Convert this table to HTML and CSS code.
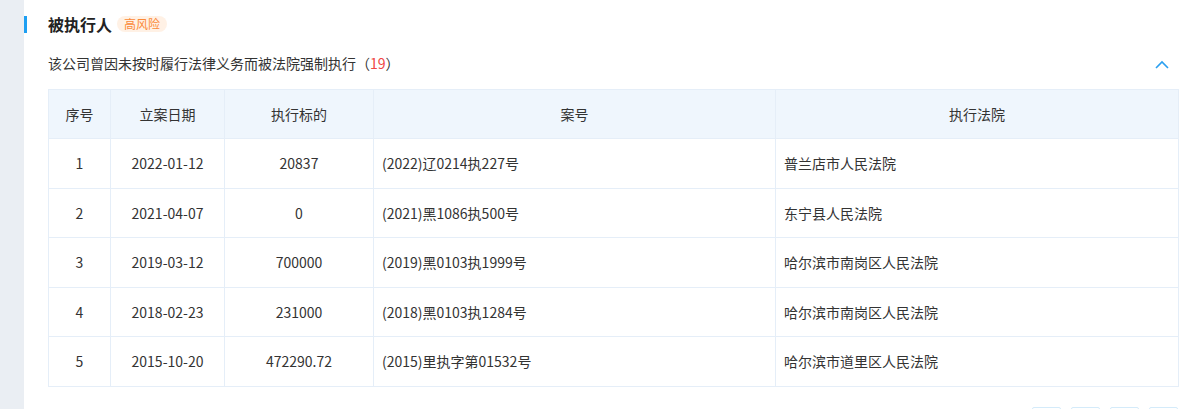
FILE: index.html
```html
<!DOCTYPE html>
<html lang="zh-CN">
<head>
<meta charset="utf-8">
<link rel="stylesheet" href="styles.css">
</head>
<body>
<div class="page">
  <aside class="side"></aside>
  <main class="panel">
    <div class="title-row">
      <span class="title-bar"></span>
      <h2 class="title">被执行人</h2>
      <span class="badge">高风险</span>
    </div>
    <div class="sub-row">
      <p class="sub">该公司曾因未按时履行法律义务而被法院强制执行（<span class="count">19</span>）</p>
      <svg class="chev" width="14" height="9" viewBox="0 0 14 9"><path d="M1 8 L7 2 L13 8" fill="none" stroke="#2a9ff0" stroke-width="1.6"/></svg>
    </div>
    <table class="tbl">
      <colgroup>
        <col class="c1"><col class="c2"><col class="c3"><col class="c4"><col class="c5">
      </colgroup>
      <thead>
        <tr><th>序号</th><th>立案日期</th><th>执行标的</th><th>案号</th><th>执行法院</th></tr>
      </thead>
      <tbody>
        <tr><td class="ctr">1</td><td class="ctr">2022-01-12</td><td class="ctr">20837</td><td>(2022)辽0214执227号</td><td>普兰店市人民法院</td></tr>
        <tr><td class="ctr">2</td><td class="ctr">2021-04-07</td><td class="ctr">0</td><td>(2021)黑1086执500号</td><td>东宁县人民法院</td></tr>
        <tr><td class="ctr">3</td><td class="ctr">2019-03-12</td><td class="ctr">700000</td><td>(2019)黑0103执1999号</td><td>哈尔滨市南岗区人民法院</td></tr>
        <tr><td class="ctr">4</td><td class="ctr">2018-02-23</td><td class="ctr">231000</td><td>(2018)黑0103执1284号</td><td>哈尔滨市南岗区人民法院</td></tr>
        <tr><td class="ctr">5</td><td class="ctr">2015-10-20</td><td class="ctr">472290.72</td><td>(2015)里执字第01532号</td><td>哈尔滨市道里区人民法院</td></tr>
      </tbody>
    </table>
    <div class="pager">
      <span class="pg"></span><span class="pg"></span><span class="pg"></span><span class="pg"></span>
    </div>
  </main>
</div>
</body>
</html>
```
FILE: styles.css
```css
html, body {
  margin: 0;
  padding: 0;
  background: #fff;
  height: 409px;
  overflow: hidden;
}
body {
  font-family: "Noto Sans CJK SC", "Noto Sans", sans-serif;
  color: #333;
}
.page {
  display: flex;
  height: 409px;
  overflow: hidden;
}
.side {
  width: 24px;
  flex: none;
  background: #eaeef3;
}
.panel {
  flex: 1;
  padding: 0 22px 0 0;
}
.title-row {
  display: flex;
  align-items: center;
  height: 18px;
  margin-top: 15px;
}
.title-bar {
  width: 3px;
  height: 17px;
  background: #1e9ff2;
  margin-right: 21px;
}
.title {
  margin: 0;
  font-size: 16px;
  font-weight: bold;
  color: #222;
  line-height: 18px;
}
.badge {
  margin-left: 5px;
  background: #fff1e5;
  color: #fb8a38;
  font-size: 12px;
  line-height: 16px;
  padding: 0 7px;
  border-radius: 8px;
}
.sub-row {
  display: flex;
  align-items: center;
  justify-content: space-between;
  margin-top: 20px;
  padding-left: 24px;
  height: 20px;
}
.sub {
  margin: 0;
  font-size: 14px;
  line-height: 20px;
  color: #333;
}
.count {
  color: #f04545;
}
.chev {
  margin-right: 10px;
  margin-top: 2px;
}
.tbl {
  margin-top: 16px;
  margin-left: 24px;
  width: 1130px;
  border-collapse: collapse;
  table-layout: fixed;
  font-size: 14px;
}
.c1 { width: 62px; }
.c2 { width: 114px; }
.c3 { width: 149px; }
.c4 { width: 402px; }
.c5 { width: 403px; }
.tbl th, .tbl td {
  border: 1px solid #e5eef8;
  padding: 0 8px;
  font-weight: normal;
  color: #333;
}
.tbl th {
  background: #eff6fd;
  text-align: center;
  height: 48px;
}
.tbl td {
  text-align: left;
  height: 48.5px;
}
.tbl td.ctr {
  text-align: center;
}
.pager {
  display: flex;
  justify-content: flex-end;
  gap: 10px;
  margin-top: 20px;
  padding-right: 1px;
}
.pg {
  width: 27px;
  height: 28px;
  border: 1px solid #d4ebfa;
  border-radius: 2px;
  background: #fff;
}
```
